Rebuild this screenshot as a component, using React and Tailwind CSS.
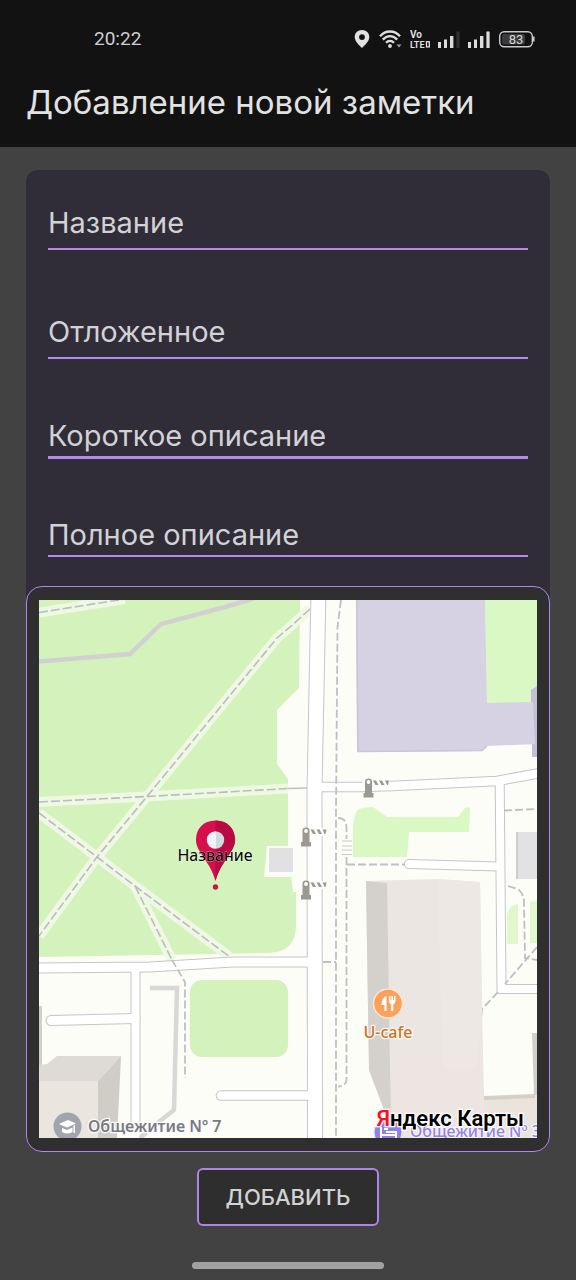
import React from "react";

const FIELDS = [
  { name: "title", label: "Название", input: "border-b-2 pb-[7px]" },
  { name: "deferred", label: "Отложенное", input: "mt-16 border-b-2 pb-[7px]" },
  { name: "summary", label: "Короткое описание", input: "mt-[59px] border-b-3 pb-0.5" },
  { name: "details", label: "Полное описание", input: "mt-[58px] border-b-2 pb-0.5" },
];

function Signal({ bars }) {
  return (
    <svg className="h-[18px] w-[22px]" viewBox="0 0 22 18" fill="#dcdcdc" aria-hidden="true">
      <rect x="0" y="12" width="3" height="6" />
      <rect x="6" y="9.5" width="3" height="8.5" />
      <rect x="12" y="6" width="3.4" height="12" />
      <rect x="18.4" y="1.5" width="3.2" height="16.5" fill={bars === 4 ? "#dcdcdc" : "#303030"} />
    </svg>
  );
}

function StatusBar() {
  return (
    <div className="flex items-center justify-between pt-[26px] pr-[41px] pl-[94px]">
      <span className="font-['Roboto',sans-serif] text-[19px] leading-[26px] text-[#cfcfcf]">20:22</span>
      <div className="flex items-center gap-2">
        <svg className="h-[18px] w-4" viewBox="0 0 16 18" aria-hidden="true">
          <path
            d="M8 0C3.600 0 .7 3 .7 7c0 4.200 4 7.600 7.300 11 3.300-3.400 7.300-6.800 7.300-11C15.300 3 12.400 0 8 0Zm0 4.200a2.900 2.900 0 1 1 0 5.800 2.900 2.900 0 0 1 0-5.800Z"
            fill="#e2e2e2"
            fillRule="evenodd"
          />
        </svg>
        <svg className="h-[18px] w-6" viewBox="0 0 24 18" fill="none" stroke="#dedede" strokeWidth="2.300" aria-hidden="true">
          <path d="M2 6.200C7.500-.1 16.500-.1 22 6.200" />
          <path d="M4.800 9.600c4.300-4.600 10.100-4.600 14.400 0" />
          <path d="M8 12.800c2.400-2.500 5.600-2.500 8 0" />
          <circle cx="12" cy="16" r="1.900" fill="#dedede" stroke="none" />
          <path d="M18.500 14.500h5L21 17.500Z" fill="#a0a0a0" stroke="none" />
        </svg>
        <svg className="h-[18px] w-5 font-['Roboto',sans-serif]" viewBox="0 0 20 18" fill="#dedede" aria-hidden="true">
          <text x="0" y="8" fontSize="10" fontWeight="700">Vo</text>
          <text x="0" y="17.500" fontSize="9" fontWeight="700">LTE</text>
          <rect x="16.500" y="11.700" width="2.800" height="5.200" fill="none" stroke="#dedede" strokeWidth="1.300" />
        </svg>
        <Signal bars={3} />
        <Signal bars={4} />
        <svg className="h-[18px] w-[37px] font-['Roboto',sans-serif]" viewBox="0 0 37 18" aria-hidden="true">
          <rect x="1.700" y="1.700" width="32.600" height="15" rx="4.500" fill="#121212" stroke="#cacaca" strokeWidth="1.400" />
          <rect x="4" y="4" width="23" height="10.500" rx="2" fill="#3a3a3a" />
          <path d="M35.800 6.500v5" stroke="#cacaca" strokeWidth="1.600" />
          <text x="18" y="14" fontSize="13" textAnchor="middle" fill="#d8d8d8">83</text>
        </svg>
      </div>
    </div>
  );
}

const ROADS = [
  { d: "M39 968L150 967L233 962H315", w: 9 },
  { d: "M135.500 968V1121", w: 8 },
  { d: "M51 1020.500L135 1018.500", w: 9 },
  { d: "M221 1095.500H315", w: 8.500 },
  { d: "M315 787H360L392 786L497 781L540 773", w: 8.500 },
  { d: "M499.700 783L501.500 989H542", w: 8 },
  { d: "M409 864L499 866.500", w: 8 },
  { d: "M318.500 590L314.500 790L315 1150", w: 14 },
];

const PARK_PATHS = [
  "M39 612.500L125 599",
  "M310 609L290 627L277 638L147 796.500L97 857L39 936",
  "M39 802L147 796.500L288 788.500",
  "M39 813L97 857L135 886L230 957",
  "M135 886L172 960",
];

const FOOTPATHS = [
  "M341 600L337.500 627L336 813V1138",
  "M338 818Q346.500 818 346.500 828V1080Q346 1086 338 1086.500",
  "M347 864.500H405",
  "M323 962H336",
  "M504 810.500L537 809",
  "M508 886L518 889Q524 894 524 902L525 958L537 960",
  "M537 947L505 984",
  "M498 992L482 1009L478 1053",
  "M172 960L185 982V1078",
];

function Barrier({ x, y }) {
  return (
    <g transform={`translate(${x} ${y})`}>
      <rect x="-6" y="-1" width="27" height="8" fill="#fbfcf7" />
      <path d="M-3.500 1.500Q-3.500-1.500 0-1.500t3.500 3V13h1.500v4.500h-10v-4.500H-3.500Z" fill="#9c9893" />
      <circle cx="0" cy="2" r="1.900" fill="#fff" />
      <path d="M4.500 0.500h3l2.500 4.500h-3ZM10.500 0.500h3l2.500 4.500h-3ZM16.500 0.500h4l-1 4.500h-1Z" fill="#9c9893" />
    </g>
  );
}

function CityMap() {
  return (
    <svg
      className="block h-auto w-full font-['Noto_Sans','Open_Sans',sans-serif]"
      viewBox="39 600 498 538"
      role="img"
      aria-label="Карта"
    >
      <defs>
        <linearGradient id="pinDot" x1="0" x2="1">
          <stop offset="0.500" stopColor="#f1f2f4" />
          <stop offset="0.500" stopColor="#cfdbe1" />
        </linearGradient>
      </defs>
      <rect x="39" y="600" width="498" height="538" fill="#fbfdf6" />

      <path d="M39 600H300L299 688L277 710V764L288 779V848L293 892H296V925Q296 953 268 953L39 957Z" fill="#d4f2bb" />
      <rect x="190" y="980" width="98" height="77" rx="12" fill="#d4f2bb" />
      <path d="M485 600H537V690L531 703H487Z" fill="#daf8c3" />
      <path d="M353 857V827Q354 812 359 809Q366 807 373 807L387 817H458L465 808L470 807L469 832H409L407 857Z" fill="#daf8c3" />
      <path d="M507 944V915Q509 905 518 904V944ZM530 943V902L537 900V943Z" fill="#e1f8cf" />

      <g fill="none" stroke="#eef8e3" strokeWidth="10">
        {PARK_PATHS.map((d) => (
          <path key={d} d={d} />
        ))}
      </g>
      <g fill="none" stroke="#bbbcc0" strokeWidth="1.600" strokeDasharray="9 3">
        {PARK_PATHS.map((d) => (
          <path key={d} d={d} />
        ))}
      </g>
      <path d="M288 788.500L307 788" stroke="#c0c0c4" strokeWidth="1.400" />
      <path d="M39 661.500L130 654L161 624L225 607L255 598" fill="none" stroke="#d2d0d1" strokeWidth="4.500" />
      <path d="M267 846H295V877H264Z" fill="#fbfdf6" />
      <rect x="269" y="848" width="24" height="24" fill="#e1e1e3" />

      <path d="M356 600H485L487 703L531 702V690L537 687V744L487 746L482 751L357 752Z" fill="#d6d2e4" />
      <path d="M356.700 600L358 751.500L482 750.500L487 746" fill="none" stroke="#c9c5da" strokeWidth="1.600" />
      <path d="M531 690L537 686V757H532V744H535L533 702H531Z" fill="#c3bfd6" />
      <rect x="516" y="832" width="21" height="47" fill="#e2e2e4" />
      <path d="M517 832V879" stroke="#cecdd1" strokeWidth="2" />

      <path d="M150 988H177L174 1110L160 1121L140 1138" fill="none" stroke="#d8d8d6" strokeWidth="4.500" />
      <path d="M39 1006H42V1066H39Z" fill="#d2cfcb" />
      <path d="M39 1065L47 1064L57 1056H121L98 1081H39Z" fill="#dedbd6" />
      <path d="M121 1056L98 1081V1138H117Z" fill="#d0ccc6" />
      <path d="M39 1081H98V1138H39Z" fill="#ebe5df" />

      <g fill="none" strokeLinecap="round" stroke="#c6c5ca">
        {ROADS.map((r) => (
          <path key={r.d} d={r.d} strokeWidth={r.w + 2} />
        ))}
      </g>
      <g fill="none" strokeLinecap="round" stroke="#ffffff">
        {ROADS.map((r) => (
          <path key={r.d} d={r.d} strokeWidth={r.w} />
        ))}
      </g>

      <g fill="none" stroke="#c0bfc7" strokeWidth="1.800" strokeDasharray="8 3">
        {FOOTPATHS.map((d) => (
          <path key={d} d={d} />
        ))}
      </g>
      <rect x="341" y="839" width="12" height="17" fill="#fbfdf6" />
      <path d="M342 841H352M342 846H352M342 850H352M342 854.500H352" stroke="#c9c9cc" strokeWidth="1.200" />

      <path d="M366 881L437 879L480 882L482 1007L484 1097V1138H391L390 1107L383 1107L369 1070Z" fill="#ebe6e1" />
      <path d="M390 1068H476L484 1090V1138H391Z" fill="#ede5e1" />
      <path d="M437 879L480 882L482 1007L478 1053L476 1068H443Z" fill="#ede8e3" />
      <path d="M366 881L387 883L390 1068L391 1120H386L383 1107L369 1070Z" fill="#d4d0cb" />
      <path d="M484 1097L535 1095H537V1138H484Z" fill="#ebe4dc" />
      <path d="M484 1098L535 1096" stroke="#d5cfc8" strokeWidth="4" />
      <path d="M532 1033H537V1095H534Z" fill="#d0cdca" />

      <Barrier x={368.5} y={780} />
      <Barrier x={306} y={829} />
      <Barrier x={306} y={882} />

      <path d="M215.500 820.500C203 820.500 196 829 196 840C196 852 210 861 215.500 881C221 861 235 852 235 840C235 829 228 820.500 215.500 820.500Z" fill="#d80f4d" />
      <path d="M215.500 820.500C228 820.500 235 829 235 840C235 852 221 861 215.500 881Z" fill="#b80b43" />
      <circle cx="215.500" cy="840" r="8.700" fill="url(#pinDot)" />
      <circle cx="215.500" cy="887" r="2.700" fill="#cb1747" />
      <text x="215" y="861" fontSize="16" textAnchor="middle" fill="#000" stroke="#ffffff" strokeOpacity="0.500" strokeWidth="1" paintOrder="stroke">
        Название
      </text>

      <circle cx="388" cy="1003.500" r="14.500" fill="#f9a15d" stroke="#fde5d2" strokeWidth="1.500" />
      <path
        d="M386.500 996V1011H384.500V1005H381.500Q381.500 998 386.500 996ZM389 996H390.400V1000H391.400V996H393V1000H394V996H395.400V1001Q395.400 1003.500 393.300 1004.500V1011H391.200V1004.500Q389 1003.500 389 1001Z"
        fill="#fff"
      />
      <text x="388" y="1038" fontSize="16" fontWeight="500" textAnchor="middle" fill="#c8742b" stroke="#fbf6f0" strokeWidth="2.500" paintOrder="stroke">
        U-cafe
      </text>

      <circle cx="67.500" cy="1126.500" r="14" fill="#a2a4ad" />
      <path d="M59 1124L68 1120L76 1123.500L67 1127.500ZM62 1128L67 1130L72.500 1127.500V1132Q67 1135 62 1132ZM73.500 1125.500L75 1125V1133H73.500Z" fill="#fff" />
      <text x="88" y="1132" fontSize="16" fontWeight="600" fill="#787a86" stroke="#fbfdf6" strokeWidth="2.500" paintOrder="stroke">
        Общежитие Nº 7
      </text>

      <circle cx="388" cy="1132" r="14" fill="#8f80ea" stroke="#e9e3f7" strokeWidth="1" />
      <path d="M381 1127V1138M381 1135H396M396 1138V1132H386M384 1129H388" stroke="#fff" strokeWidth="2" fill="none" />
      <text x="410" y="1137" fontSize="16" fontWeight="500" fill="#9285e3" stroke="#f7f2f4" strokeWidth="2.500" paintOrder="stroke">
        Общежитие Nº 3
      </text>
      <text
        className="font-['Roboto',sans-serif]"
        x="524"
        y="1126"
        fontSize="22"
        fontWeight="600"
        textAnchor="end"
        stroke="#ffffff"
        strokeWidth="2.500"
        paintOrder="stroke"
      >
        <tspan fill="#f5132b">Я</tspan>
        <tspan fill="#000">ндекс Карты</tspan>
      </text>
    </svg>
  );
}

export default function App() {
  return (
    <div className="flex min-h-screen flex-col bg-[#424242] font-['Inter',sans-serif]">
      <header className="bg-[#121212] pb-6">
        <StatusBar />
        <h1 className="px-[26px] pt-[30px] text-[33px] leading-[41px] text-[#e2e2e2]">Добавление новой заметки</h1>
      </header>

      <main className="flex grow flex-col px-[26px] pt-[23px]">
        <form className="flex flex-col" onSubmit={(e) => e.preventDefault()}>
          <div className="flex flex-col rounded-t-xl bg-[#302d38] px-[22px] pt-[35px] pb-[41px]">
            {FIELDS.map((f) => (
              <input
                key={f.name}
                type="text"
                name={f.name}
                aria-label={f.label}
                placeholder={f.label}
                className={`box-content h-9 border-[#b48aee] bg-transparent text-[29px] leading-9 text-[#d2d2d4] outline-none placeholder:text-[#d2d2d4] ${f.input}`}
              />
            ))}
          </div>
          <div className="-mt-3 rounded-2xl border border-[#b185f0] bg-[#2f2f2f] px-3 py-[13px]">
            <CityMap />
          </div>
          <button
            type="submit"
            className="mt-4 self-center rounded-md border-2 border-[#ad85e6] bg-[#2e2e2e] px-[27px] py-[13px] text-[22px] leading-7 font-medium text-[#d2d2d2]"
          >
            ДОБАВИТЬ
          </button>
        </form>
      </main>

      <div className="mt-9 mb-[11px] h-[7px] w-1/3 self-center rounded-full bg-[#a1a1a1]" />
    </div>
  );
}
